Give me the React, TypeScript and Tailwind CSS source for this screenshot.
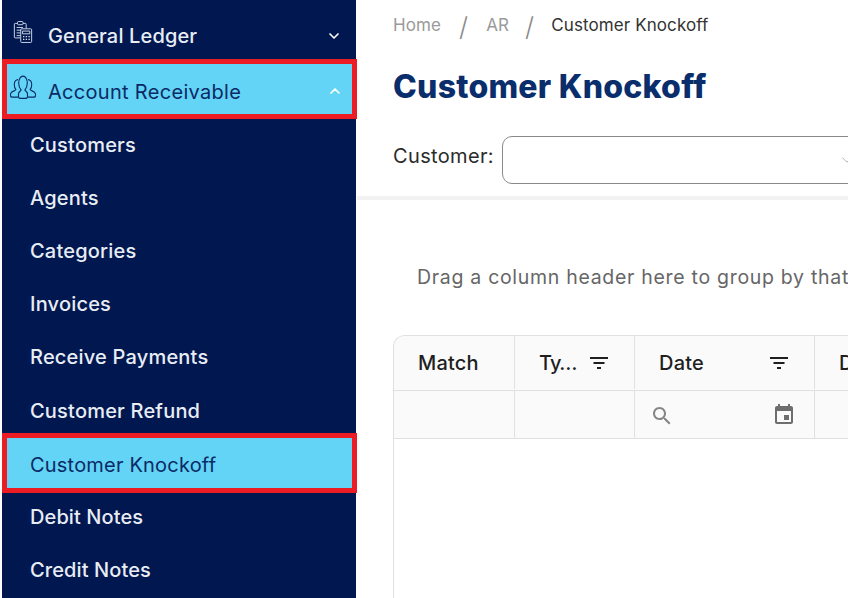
import React from 'react'
import { ChevronDown, ChevronUp } from 'lucide-react'

const FONT = "font-['Inter','Noto_Sans',sans-serif]"

const subItems = ['Customers', 'Agents', 'Categories', 'Invoices', 'Receive Payments', 'Customer Refund']

function LedgerIcon() {
  return (
    <svg width="20" height="24" viewBox="0 0 22 26" fill="none" stroke="#d9e2f2" strokeWidth="1" className="mb-[8px]">
      <path d="M5 3.5H2.5a1 1 0 0 0-1 1v14a1 1 0 0 0 1 1H8" />
      <path d="M11 3.5h2.5a1 1 0 0 1 1 1V9" />
      <rect x="5" y="1.5" width="6" height="3.5" rx="1" />
      <path d="M4 8h7M4 11h5M4 14h4M4 17h4" />
      <rect x="8.5" y="9.5" width="12" height="15" rx="1" />
      <path d="M10.5 12h8v3h-8z" />
      <path d="M11 18h1.5M14 18h1.5M17 18h1.5M11 21h1.5M14 21h1.5M17 21h1.5" strokeWidth="1.4" />
    </svg>
  )
}

function PeopleIcon() {
  return (
    <svg width="26" height="24" viewBox="1 1.5 26 21" preserveAspectRatio="none" fill="none" stroke="#0a2a66" strokeWidth="1.1" className="-mt-[5px]">
      <path d="M9.5 20.5v-2.5c0-1.5 2-2.3 2.6-3.4-1.5-1.3-2.4-3.4-2.4-6 0-3.5 1.8-6.2 4.3-6.2s4.3 2.7 4.3 6.2c0 2.6-.9 4.7-2.4 6 .6 1.1 2.6 1.9 2.6 3.4v2.5c0 1-1 1.5-2 1.5h-5c-1 0-2-.5-2-1.5z" />
      <path d="M9 5.5C7 5.5 5.3 7.3 5.3 10c0 1.8.6 3.3 1.6 4.3-.4 1.1-5.4 1.5-5.4 4v1.2c0 .8.7 1.3 1.5 1.3h6" />
      <path d="M19 5.5c2 0 3.7 1.8 3.7 4.5 0 1.8-.6 3.3-1.6 4.3.4 1.1 5.4 1.5 5.4 4v1.2c0 .8-.7 1.3-1.5 1.3h-6" />
    </svg>
  )
}

function FilterIcon() {
  return (
    <svg width="24" height="24" viewBox="0 0 24 24" fill="#1f1f1f">
      <path d="M3 6h18v2H3zM6.5 11h11v2h-11zM10 16h4v2h-4z" />
    </svg>
  )
}

function SearchIcon() {
  return (
    <svg width="24" height="24" viewBox="0 0 24 24" fill="#858585" className="mt-[3px]">
      <path d="M15.5 14h-.79l-.28-.27C15.41 12.59 16 11.11 16 9.5 16 5.91 13.09 3 9.5 3S3 5.91 3 9.5 5.91 16 9.5 16c1.61 0 3.09-.59 4.23-1.57l.27.28v.79l5 4.99L20.49 19l-4.99-5zm-6 0C7.01 14 5 11.99 5 9.5S7.01 5 9.5 5 14 7.01 14 9.5 11.99 14 9.5 14z" />
    </svg>
  )
}

function CalendarIcon() {
  return (
    <svg width="24" height="24" viewBox="0 0 24 24" fill="#6e6e6e">
      <path d="M17 12h-5v5h5v-5zM16 1v2H8V1H6v2H5c-1.11 0-1.99.9-1.99 2L3 19c0 1.1.89 2 2 2h14c1.1 0 2-.9 2-2V5c0-1.1-.9-2-2-2h-1V1h-2zm3 18H5V8h14v11z" />
    </svg>
  )
}

export default function App() {
  return (
    <div className={`${FONT} flex h-[598px] w-[848px] overflow-hidden bg-white`}>
      <aside className="ml-[2px] h-full w-[354px] shrink-0 bg-[#00174f]">
        <div className="flex h-[59px] items-center pt-[13px] pl-[11px] pr-[14px] text-[#e8edf5]">
          <LedgerIcon />
          <span className="ml-[15px] flex-1 text-[20px] font-medium tracking-[0.15px]">General Ledger</span>
          <ChevronDown size={16} strokeWidth={2.5} className="text-white" />
        </div>
        <div className="-mr-[1px] flex h-[60px] items-center border-[5px] border-[#ec1c24] bg-[#63d4f5] pl-[3px] pr-[9px] text-[#0a2a66]">
          <PeopleIcon />
          <span className="ml-[12px] mt-[6px] flex-1 text-[20px] tracking-[0.3px]">Account Receivable</span>
          <ChevronUp size={16} strokeWidth={2.5} className="mt-[3px] text-white" />
        </div>
        <div className="-mt-[1px] flex flex-col text-[#e8edf5]">
          {subItems.map((item) => (
            <div key={item} className="flex h-[53.2px] items-center pl-[28px] text-[20px] font-medium tracking-[0.2px]">
              {item}
            </div>
          ))}
        </div>
        <div className="-mr-[1px] -mt-[4px] flex h-[60px] items-center border-[5px] border-[#ec1c24] bg-[#63d4f5] pl-[23px] pt-[3px] text-[20px] tracking-[0.2px] text-[#0a2a66]">
          Customer Knockoff
        </div>
        <div className="-mt-[3px] flex flex-col text-[#e8edf5]">
          <div className="flex h-[53px] items-center pl-[28px] text-[20px] font-medium tracking-[0.1px]">Debit Notes</div>
          <div className="flex h-[53px] items-center pl-[28px] text-[20px] font-medium tracking-[0.1px]">Credit Notes</div>
        </div>
      </aside>

      <main className="ml-[1px] min-w-0 flex-1 overflow-hidden">
        <div className="px-[36px]">
          <nav className="flex h-[50px] items-center pt-[2px] text-[17px] tracking-[0.1px] text-[#9a9a9a]">
            <span>Home</span>
            <span className="ml-[18px] text-[26px] font-light text-[#8a8a8a]">/</span>
            <span className="ml-[18px]">AR</span>
            <span className="ml-[16px] text-[26px] font-light text-[#8a8a8a]">/</span>
            <span className="ml-[17px] text-[#333333]">Customer Knockoff</span>
          </nav>
          <h1 className="mt-[15px] whitespace-nowrap text-[32px] leading-[44px] font-extrabold tracking-[0.25px] text-[#0a2d6b]">Customer Knockoff</h1>
          <div className="mt-[27px] flex items-center">
            <span className="mb-[8px] w-[109px] shrink-0 text-[20px] tracking-[0.35px] text-[#2b2b2b]">Customer:</span>
            <div className="flex h-[48px] w-[500px] shrink-0 items-center rounded-[10px] border border-[#8a8a8a] pl-[335px]">
              <ChevronDown size={18} strokeWidth={1} className="text-[#9a9a9a]" />
            </div>
          </div>
        </div>
        <div className="mt-[12px] h-[4px] bg-[#f2f2f2]" />

        <div className="pl-[36px]">
          <div className="ml-[24px] mt-[64px] h-[27px] whitespace-nowrap text-[19.5px] leading-[27px] tracking-[0.7px] text-[#666666]">
            Drag a column header here to group by that column
          </div>
          <div className="mt-[44px] h-[300px] w-[700px] rounded-tl-[12px] border-t border-l border-[#e0e0e0]">
            <div className="flex h-[55px] rounded-tl-[12px] border-b border-[#e0e0e0] bg-[#fafafa] pb-[1px] text-[20px] font-medium tracking-[0.2px] text-[#1f1f1f]">
              <div className="flex w-[121px] items-center border-r border-[#e0e0e0] pl-[24px]">Match</div>
              <div className="flex w-[120px] items-center justify-between border-r border-[#e0e0e0] pl-[24px] pr-[23px]">
                <span className="tracking-[-0.8px]">Ty…</span>
                <FilterIcon />
              </div>
              <div className="flex w-[180px] items-center justify-between border-r border-[#e0e0e0] pl-[24px] pr-[23px]">
                <span>Date</span>
                <FilterIcon />
              </div>
              <div className="flex flex-1 items-center pl-[24px]">Description</div>
            </div>
            <div className="flex h-[48px] border-b border-[#e0e0e0] bg-[#fafafa]">
              <div className="w-[121px] border-r border-[#e0e0e0]" />
              <div className="w-[120px] border-r border-[#e0e0e0]" />
              <div className="flex w-[180px] items-center justify-between border-r border-[#e0e0e0] pl-[15px] pr-[18px]">
                <SearchIcon />
                <CalendarIcon />
              </div>
              <div className="flex-1" />
            </div>
          </div>
        </div>
      </main>
    </div>
  )
}
